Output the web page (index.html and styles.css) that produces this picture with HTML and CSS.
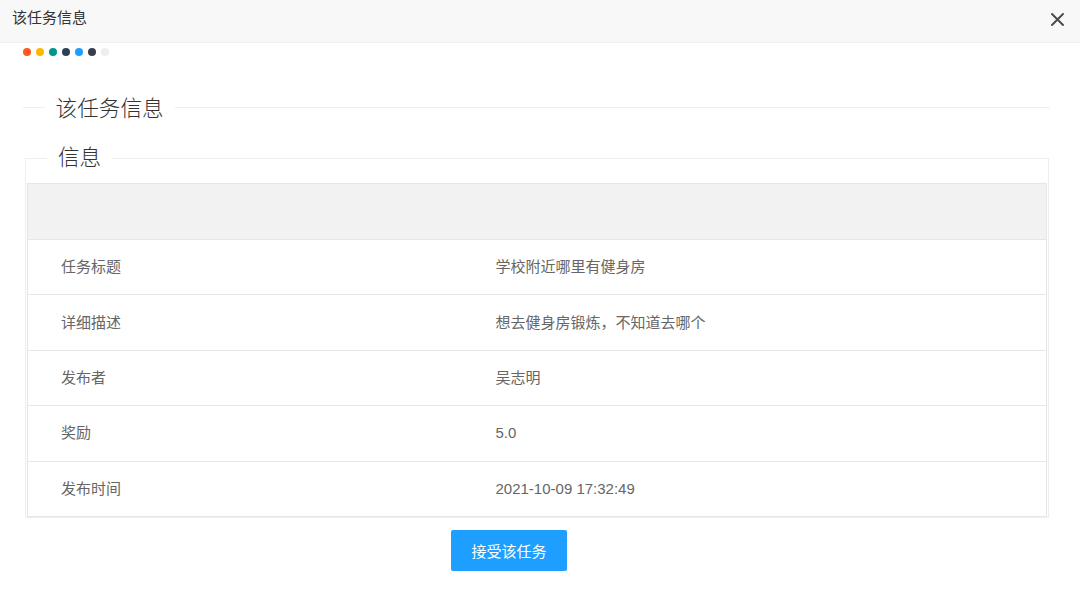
FILE: index.html
```html
<!DOCTYPE html>
<html lang="zh-CN">
<head>
<meta charset="utf-8">
<title>该任务信息</title>
<link rel="stylesheet" href="styles.css">
</head>
<body>
<div class="layer">
  <div class="layer-title">
    <span class="title-text">该任务信息</span>
    <span class="close" aria-label="关闭">
      <svg width="13" height="13" viewBox="0 0 13 13"><path d="M1 1 L12 12 M12 1 L1 12" stroke="#4a4a4a" stroke-width="1.9" stroke-linecap="round" fill="none"/></svg>
    </span>
  </div>
  <div class="layer-content">
    <div class="dots">
      <span class="dot c1"></span><span class="dot c2"></span><span class="dot c3"></span><span class="dot c4"></span><span class="dot c5"></span><span class="dot c6"></span><span class="dot c7"></span>
    </div>
    <fieldset class="field-title">
      <legend>该任务信息</legend>
    </fieldset>
    <fieldset class="field-box">
      <legend>信息</legend>
      <table class="info-table">
        <colgroup><col class="col-label"><col></colgroup>
        <thead><tr><th></th><th></th></tr></thead>
        <tbody>
          <tr><td>任务标题</td><td>学校附近哪里有健身房</td></tr>
          <tr><td>详细描述</td><td>想去健身房锻炼，不知道去哪个</td></tr>
          <tr><td>发布者</td><td>吴志明</td></tr>
          <tr><td>奖励</td><td>5.0</td></tr>
          <tr><td>发布时间</td><td>2021-10-09 17:32:49</td></tr>
        </tbody>
      </table>
    </fieldset>
    <div class="actions">
      <button class="btn">接受该任务</button>
    </div>
  </div>
</div>
</body>
</html>
```
FILE: styles.css
```css
* { box-sizing: border-box; }
html, body {
  margin: 0;
  padding: 0;
  background: #fff;
  font-family: "Liberation Sans", "Noto Sans CJK SC", sans-serif;
  color: #333;
}
.layer { width: 1080px; height: 598px; overflow: hidden; }
.layer-title {
  height: 43px;
  background: #f8f8f8;
  border-bottom: 1px solid #eee;
  display: flex;
  justify-content: space-between;
  align-items: flex-start;
  padding: 0 16px 0 12px;
}
.title-text {
  font-size: 15px;
  line-height: 36px;
  color: #333;
}
.close {
  display: flex;
  margin-top: 13px;
}
.dots {
  display: flex;
  gap: 5px;
  padding-left: 23px;
  height: 8px;
  margin-top: 5px;
}
.dot { width: 8px; height: 8px; border-radius: 50%; display: block; }
.c1 { background: #FF5722; }
.c2 { background: #FFB800; }
.c3 { background: #009688; }
.c4 { background: #2F4056; }
.c5 { background: #1E9FFF; }
.c6 { background: #393D49; }
.c7 { background: #eeeeee; }

.field-title {
  margin: 36px 30px 0 23px;
  padding: 0;
  border: 0;
  border-top: 1px solid #eee;
  min-width: 0;
}
.field-title legend,
.field-box legend {
  margin-left: 21.6px;
  padding: 0 11px;
  font-size: 21.6px;
  font-weight: 300;
  line-height: 30px;
  color: #333;
}
.field-title legend { padding-top: 3px; line-height: 28px; }
.field-box {
  margin: 20px 31px 0 25px;
  padding: 10px 1px 0 1px;
  border: 1px solid #eee;
  min-width: 0;
}
.field-box legend { margin-left: 20px; }
.info-table {
  width: 100%;
  border-collapse: collapse;
  table-layout: fixed;
  border: 1px solid #e6e6e6;
  font-size: 15px;
  color: #666;
}
.col-label { width: 435px; }
.info-table th {
  height: 56px;
  background: #f2f2f2;
  padding: 0;
}
.info-table td {
  height: 55.4px;
  padding: 0 33px;
  border-top: 1px solid #e6e6e6;
  line-height: 20px;
}
.actions {
  padding-left: 451px;
  margin-top: 12px;
}
.btn {
  height: 41px;
  width: 116px;
  background: #1E9FFF;
  color: #fff;
  border: 0;
  border-radius: 2px;
  font-family: inherit;
  font-size: 15px;
  padding: 0;
}
```
